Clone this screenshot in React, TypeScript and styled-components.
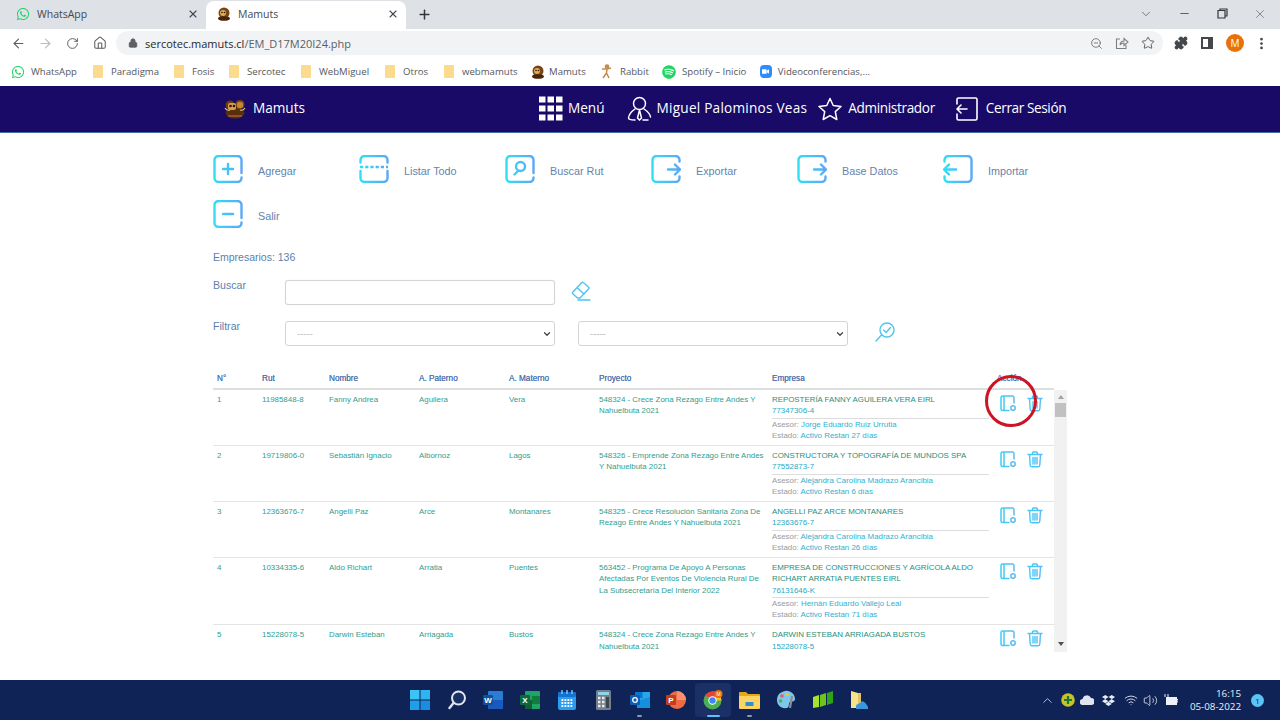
import React from 'react';
import styled, { createGlobalStyle } from 'styled-components';
import { ArrowLeft, ArrowRight, RotateCw, Home, Lock, ZoomOut, Star, X, Plus, ChevronDown, ChevronUp, Minus, Wifi, Volume2, Puzzle, EllipsisVertical } from 'lucide-react';
import { FaWhatsapp, FaSpotify, FaVideo, FaDropbox } from 'react-icons/fa';

const GlobalStyle = createGlobalStyle`
  html, body { margin: 0; padding: 0; background: #fff; }
  * { box-sizing: border-box; }
`;

const Screen = styled.div`
  width: 1280px;
  height: 720px;
  overflow: hidden;
  display: flex;
  flex-direction: column;
  font-family: "Liberation Sans", Arial, sans-serif;
  background: #fff;
`;

/* browser chrome */
const TabStrip = styled.div`
  height: 29px;
  flex: none;
  background: #dee1e6;
  display: flex;
  align-items: flex-end;
  font-family: "Open Sans", "Noto Sans", sans-serif;
  font-size: 10.5px;
  color: #45484d;
`;
const Tab = styled.div<{ $active?: boolean; $w: number }>`
  width: ${p => p.$w}px;
  height: 28px;
  padding: 0 7px 2px ${p => (p.$active ? 11 : 16)}px;
  display: flex;
  align-items: center;
  gap: 7px;
  background: ${p => (p.$active ? '#fff' : 'transparent')};
  border-radius: 8px 8px 0 0;
`;
const TabTitle = styled.span`
  flex: 1;
`;
const NewTab = styled.div`
  width: 36px;
  height: 28px;
  padding-bottom: 2px;
  display: flex;
  align-items: center;
  justify-content: center;
  color: #33363a;
`;
const WindowButtons = styled.div`
  margin-left: auto;
  height: 28px;
  padding: 0 1px 3px 0;
  display: flex;
  align-items: center;
  color: #4a4d52;
`;
const WindowButton = styled.div`
  width: 38px;
  display: flex;
  justify-content: center;
`;
const AddressRow = styled.div`
  height: 28px;
  flex: none;
  background: #fff;
  display: flex;
  align-items: center;
  padding-left: 5px;
  color: #5f6368;
`;
const NavButton = styled.div<{ $dim?: boolean }>`
  width: 27px;
  display: flex;
  justify-content: center;
  color: ${p => (p.$dim ? '#b9bcc1' : '#5a5e63')};
`;
const Omnibox = styled.div`
  width: 1047px;
  height: 24px;
  margin-left: 3px;
  background: #f1f3f4;
  border-radius: 12px;
  display: flex;
  align-items: center;
  padding: 0 8px 0 12px;
  font-family: "Open Sans", "Noto Sans", sans-serif;
  font-size: 11px;
  color: #5c5f64;
`;
const Url = styled.span`
  margin-left: 7px;
  flex: 1;
`;
const Host = styled.span`
  color: #26282c;
`;
const OmniIcons = styled.div`
  display: flex;
  align-items: center;
  gap: 12px;
`;
const ProfileArea = styled.div`
  display: flex;
  align-items: center;
  gap: 13px;
  margin-left: 11px;
`;
const Avatar = styled.div`
  width: 18px;
  height: 18px;
  border-radius: 50%;
  background: #e8710a;
  color: #fff;
  font-family: "Open Sans", sans-serif;
  font-size: 10px;
  display: flex;
  align-items: center;
  justify-content: center;
`;
const SidePanelIcon = styled.div`
  width: 12px;
  height: 12px;
  border: 2px solid #44474b;
  border-right-width: 5px;
`;
const Kebab = styled(EllipsisVertical)`
  margin-left: -3px;
`;
const BookmarkBar = styled.div`
  height: 29px;
  flex: none;
  background: #fff;
  display: flex;
  align-items: center;
  padding-left: 11px;
  font-family: "Open Sans", "Noto Sans", sans-serif;
  font-size: 9.6px;
  color: #55585d;
`;
const Bookmark = styled.div<{ $w: number; $gap?: number }>`
  width: ${p => p.$w}px;
  flex: none;
  display: flex;
  align-items: center;
  gap: ${p => p.$gap ?? 8}px;
  white-space: nowrap;
`;
const Folder = styled.div`
  width: 10px;
  height: 13px;
  background: #fcdc8c;
  border-radius: 1px;
  flex: none;
`;
const ZoomBadge = styled.div`
  width: 13px;
  height: 13px;
  border-radius: 4px;
  background: #2d8cff;
  color: #fff;
  display: flex;
  align-items: center;
  justify-content: center;
`;

/* site header */
const SiteBar = styled.header`
  height: 47px;
  flex: none;
  background: #190a68;
  border-bottom: 1px solid #4a6aa8;
  padding: 0 0 1px 224px;
  display: flex;
  align-items: center;
  color: #fff;
  font-family: "Open Sans", "Noto Sans", sans-serif;
  font-size: 13.6px;
`;
const Brand = styled.div`
  width: 314px;
  display: flex;
  align-items: center;
  gap: 7px;
`;
const SiteLink = styled.div<{ $gap: number; $mr: number }>`
  display: flex;
  align-items: center;
  gap: ${p => p.$gap}px;
  margin-right: ${p => p.$mr}px;
  white-space: nowrap;
`;
const SiteText = styled.span<{ $ls?: number }>`
  margin-bottom: 3px;
  letter-spacing: ${p => p.$ls ?? 0}px;
`;

/* page body */
const Content = styled.main`
  flex: 1;
  padding: 22px 0 0 213px;
  color: #5b7fae;
`;
const ActionGrid = styled.div`
  display: grid;
  grid-template-columns: repeat(6, 146px);
  grid-auto-rows: 45px;
  font-size: 10.8px;
  color: #6583ac;
`;
const Action = styled.div`
  display: flex;
  align-items: flex-start;
  gap: 15px;
  line-height: 33px;
`;
const BoxSvg = styled.svg`
  flex: none;
`;
const Counter = styled.div`
  margin-top: 6px;
  font-size: 10.5px;
  line-height: 12px;
`;
const FilterRow = styled.div<{ $mt: number }>`
  display: flex;
  align-items: flex-start;
  margin-top: ${p => p.$mt}px;
`;
const FilterLabel = styled.label`
  width: 72px;
  font-size: 10.6px;
  line-height: 11px;
`;
const TextBox = styled.input`
  width: 270px;
  height: 25px;
  border: 1px solid #d4d4d4;
  border-radius: 3px;
  background: #fff;
  box-shadow: 0 0 1px #ddd;
`;
const SelectBox = styled.div`
  position: relative;
  width: 270px;
  height: 25px;
  margin-right: 23px;
`;
const Select = styled.select`
  appearance: none;
  width: 100%;
  height: 100%;
  border: 1px solid #d4d4d4;
  border-radius: 3px;
  background: #fff;
  padding-left: 11px;
  font-family: "Liberation Sans", sans-serif;
  font-size: 9.5px;
  color: #b5b5b5;
`;
const SelectChevron = styled(ChevronDown)`
  position: absolute;
  right: 3px;
  top: 8px;
  pointer-events: none;
  color: #444;
`;
const Eraser = styled.svg`
  margin: 1px 0 0 16px;
`;
const CheckSearch = styled.svg`
  margin: 1px 0 0 4px;
`;

const TableWrap = styled.section`
  position: relative;
  width: 854px;
  margin-top: 26px;
`;
const columns = '45px 67px 90px 90px 90px 173px 225px 1fr';
const HeadRow = styled.div`
  width: 841px;
  height: 18px;
  border-bottom: 2px solid #dedede;
  display: grid;
  grid-template-columns: ${columns};
  font-size: 8.2px;
  line-height: 13px;
  color: #4f75b0;
`;
const HeadCell = styled.div`
  padding-left: 4px;
  text-shadow: 0 0 0.4px #4f75b0;
  white-space: nowrap;
`;
const TableBody = styled.div`
  display: flex;
  height: 262px;
  overflow: hidden;
`;
const Rows = styled.div`
  width: 841px;
  overflow: hidden;
`;
const Row = styled.div`
  display: grid;
  grid-template-columns: ${columns};
  border-bottom: 1px solid #e4e4e4;
  padding: 4px 0 3.8px;
  font-size: 7.9px;
  line-height: 11.3px;
  color: #2f9e8f;
`;
const Cell = styled.div`
  padding: 0 4px;
`;
const CompanyName = styled.div`
  color: #1f8f7c;
`;
const CompanyRut = styled.div`
  color: #27a9c0;
`;
const Rule = styled.div`
  width: 217px;
  height: 1px;
  margin: 1px 0 0;
  background: #dcdcdc;
`;
const Meta = styled.div`
  color: #9a9a9a;
`;
const MetaValue = styled.span`
  color: #2eb1cf;
`;
const RowTools = styled.div`
  padding-left: 7px;
  display: flex;
  align-items: flex-start;
  gap: 10px;
`;
const ToolSvg = styled.svg`
  flex: none;
`;
const Scrollbar = styled.div`
  width: 13px;
  height: 262px;
  background: #f1f1f1;
  display: flex;
  flex-direction: column;
  align-items: center;
  padding-top: 5px;
`;
const ArrowUp = styled.div`
  width: 0;
  height: 0;
  border-left: 3.5px solid transparent;
  border-right: 3.5px solid transparent;
  border-bottom: 4px solid #a3a3a3;
`;
const Thumb = styled.div`
  width: 11px;
  height: 14px;
  margin-top: 4px;
  background: #c1c1c1;
`;
const ArrowDown = styled.div`
  margin-top: auto;
  margin-bottom: 6px;
  width: 0;
  height: 0;
  border-left: 3.5px solid transparent;
  border-right: 3.5px solid transparent;
  border-top: 4px solid #505050;
`;
const RedCircle = styled.div`
  position: absolute;
  left: 772px;
  top: 3px;
  width: 52px;
  height: 52px;
  border: 3.6px solid #cc1424;
  border-radius: 50%;
  pointer-events: none;
`;

/* windows taskbar */
const Taskbar = styled.footer`
  height: 40px;
  flex: none;
  background: #0f2357;
  display: flex;
  align-items: center;
  color: #fff;
  padding-left: 402px;
`;
const TaskIcons = styled.div`
  display: flex;
  align-items: center;
`;
const TaskSlot = styled.div<{ $active?: boolean }>`
  position: relative;
  width: 36.6px;
  height: 34px;
  display: flex;
  align-items: center;
  justify-content: center;
  background: ${p => (p.$active ? '#1b3067' : 'transparent')};
  border-radius: 4px;
`;
const RunDot = styled.div<{ $active?: boolean }>`
  position: absolute;
  bottom: 0;
  left: 50%;
  width: ${p => (p.$active ? 13 : 5)}px;
  height: 2.5px;
  margin-left: ${p => (p.$active ? -6.5 : -2.5)}px;
  border-radius: 2px;
  background: ${p => (p.$active ? '#5cc3f5' : '#8e97ad')};
`;
const Tray = styled.div`
  margin-left: auto;
  display: flex;
  align-items: center;
  height: 40px;
  padding-right: 16px;
  gap: 7px;
`;
const TrayIcon = styled.div<{ $w: number }>`
  width: ${p => p.$w}px;
  display: flex;
  justify-content: center;
  color: #e8ecf5;
  svg {
    flex: none;
  }
`;
const Clock = styled.div`
  width: 53px;
  text-align: right;
  margin-left: 1px;
  font-family: "Open Sans", "Noto Sans", sans-serif;
  font-size: 9.8px;
  line-height: 13px;
  color: #eef1f7;
`;
const Notify = styled.div`
  width: 13px;
  height: 13px;
  margin-left: 3px;
  border-radius: 50%;
  background: #5cc3f5;
  color: #0f2357;
  font-family: "Open Sans", sans-serif;
  font-size: 8px;
  display: flex;
  align-items: center;
  justify-content: center;
`;
const HiddenDefs = styled.svg`
  position: absolute;
`;

const Gradients = () => (
  <HiddenDefs width="0" height="0">
    <defs>
      <linearGradient id="cy30" gradientUnits="userSpaceOnUse" x1="0" y1="0" x2="30" y2="0">
        <stop offset="0" stopColor="#2fe0f7" />
        <stop offset="1" stopColor="#5ca6f6" />
      </linearGradient>
      <linearGradient id="cy20" gradientUnits="userSpaceOnUse" x1="0" y1="0" x2="18" y2="0">
        <stop offset="0" stopColor="#38d0f5" />
        <stop offset="1" stopColor="#64b4f5" />
      </linearGradient>
    </defs>
  </HiddenDefs>
);

const Logo = () => (
  <svg width="22" height="20" viewBox="0 0 22 20">
    <ellipse cx="11" cy="14" rx="9.5" ry="5.5" fill="#5a2d0c" />
    <circle cx="6" cy="6" r="4.5" fill="#6d3a10" />
    <circle cx="16" cy="5.5" r="4.5" fill="#7c4514" />
    <rect x="4" y="4" width="8" height="7" rx="2" fill="#d2a24a" />
    <rect x="13" y="3" width="6" height="6" rx="2" fill="#c08a35" />
    <circle cx="6.5" cy="7" r="1.3" fill="#2c1405" />
    <circle cx="10" cy="7" r="1.3" fill="#2c1405" />
    <path d="M1 9 Q3 12 6 11 M21 9 Q19 12 16 11" stroke="#e6c67a" strokeWidth="1.2" fill="none" />
    <path d="M4 17 h14" stroke="#8d5519" strokeWidth="2" />
  </svg>
);

const TabLogo = () => (
  <svg width="14" height="14" viewBox="0 0 14 14">
    <circle cx="7" cy="6" r="5.5" fill="#7a4514" />
    <circle cx="6" cy="6" r="3" fill="#dcae55" />
    <circle cx="5" cy="5.5" r="0.8" fill="#2c1405" />
    <circle cx="7.5" cy="5.5" r="0.8" fill="#2c1405" />
    <ellipse cx="7" cy="11.5" rx="6" ry="2.3" fill="#4a250a" />
  </svg>
);

const Rabbit = () => (
  <svg width="11" height="15" viewBox="0 0 11 15" fill="none" stroke="#c58a4e" strokeWidth="1.5">
    <circle cx="6" cy="2.5" r="1.6" fill="#c58a4e" />
    <path d="M1 5 L6 5 L10 4 M6 5 L5.5 9 L2 14 M5.5 9 L8 14" />
  </svg>
);

type BoxKind = 'plus' | 'list' | 'search' | 'out' | 'in' | 'minus';

const BoxIcon = ({ kind }: { kind: BoxKind }) => {
  const frame = 'M28.5 18 V5 a4 4 0 0 0-4-4 H5.5 a4 4 0 0 0-4 4 V23 a4 4 0 0 0 4 4 H24.5 a4 4 0 0 0 4-4 V22.5';
  const body: Record<BoxKind, React.ReactNode> = {
    plus: <path d={`${frame} M15 9 V19 M10 14 H20`} />,
    minus: <path d={`${frame} M10 14 H20`} />,
    list: (
      <>
        <path d="M1.5 7.5 V5 a4 4 0 0 1 4-4 H24.5 a4 4 0 0 1 4 4 V7.5 M1.5 16 V23 a4 4 0 0 0 4 4 H24.5 a4 4 0 0 0 4-4 V16" />
        <path d="M1 12 H29" strokeLinecap="butt" strokeDasharray="3.2 2" />
      </>
    ),
    search: <path d={`${frame} M9.5 19.5 L13 16 M20 11.5 a4.5 4.5 0 1 1-9 0 a4.5 4.5 0 1 1 9 0`} />,
    out: <path d="M28.5 6.5 V5 a4 4 0 0 0-4-4 H5.5 a4 4 0 0 0-4 4 V23 a4 4 0 0 0 4 4 H24.5 a4 4 0 0 0 4-4 V21.5 M17 14.5 H28.5 M24 9.5 L29 14.5 L24 19.5" />,
    in: <path d="M1.5 6.5 V5 a4 4 0 0 1 4-4 H24.5 a4 4 0 0 1 4 4 V23 a4 4 0 0 1-4 4 H5.5 a4 4 0 0 1-4-4 V21.5 M13 14.5 H1.5 M6 9.5 L1 14.5 L6 19.5" />,
  };
  return (
    <BoxSvg width="30" height="28" viewBox="0 0 30 28" fill="none" stroke="url(#cy30)" strokeWidth="2.4" strokeLinecap="round" strokeLinejoin="round">
      {body[kind]}
    </BoxSvg>
  );
};

const DocSearch = () => (
  <ToolSvg width="17" height="18" viewBox="0 0 17 18" fill="none" stroke="url(#cy20)" strokeWidth="1.5" strokeLinecap="round">
    <path d="M14 9 V3.5 a1.5 1.5 0 0 0-1.5-1.5 H2.5 a1.5 1.5 0 0 0-1.5 1.5 V15 a1.5 1.5 0 0 0 1.5 1.5 H9 M4 2 V16.5" />
    <circle cx="13" cy="14" r="2.2" />
  </ToolSvg>
);

const Trash = () => (
  <ToolSvg width="16" height="18" viewBox="0 0 16 18" fill="none" stroke="url(#cy20)" strokeWidth="1.4" strokeLinecap="round">
    <path d="M1 4.5 H15 M5.5 4.5 V3 a1 1 0 0 1 1-1 H9.5 a1 1 0 0 1 1 1 V4.5 M2.5 4.5 L3.2 15 a1.7 1.7 0 0 0 1.7 1.7 H11.1 a1.7 1.7 0 0 0 1.7-1.7 L13.5 4.5 M6 7.5 V14 M8 7.5 V14 M10 7.5 V14" />
  </ToolSvg>
);

const ShareIcon = () => (
  <svg width="14" height="14" viewBox="0 0 14 14" fill="none" stroke="#7c8085" strokeWidth="1.1">
    <path d="M5 3 H1.5 V12.5 H11 V9 M5 9 Q5.5 5 9 5 V2.5 L13 6 L9 9.5 V7 Q6.5 7 5 9" />
  </svg>
);

const TaskIcon = ({ name }: { name: string }) => {
  switch (name) {
    case 'win':
      return (
        <svg width="20" height="20" viewBox="0 0 20 20">
          <rect x="0" y="0" width="9.5" height="9.5" fill="#3cc4f4" />
          <rect x="10.5" y="0" width="9.5" height="9.5" fill="#2fb4f0" />
          <rect x="0" y="10.5" width="9.5" height="9.5" fill="#1f9fe6" />
          <rect x="10.5" y="10.5" width="9.5" height="9.5" fill="#1a8ede" />
        </svg>
      );
    case 'search':
      return (
        <svg width="18" height="20" viewBox="0 0 18 20" fill="none">
          <circle cx="10.5" cy="8" r="6.5" stroke="#dfe6f2" strokeWidth="2" fill="#1c2f63" />
          <path d="M5.5 13 L1.5 18" stroke="#dfe6f2" strokeWidth="2.4" strokeLinecap="round" />
        </svg>
      );
    case 'word':
      return (
        <svg width="20" height="18" viewBox="0 0 20 18">
          <rect x="5" y="0" width="15" height="18" rx="1" fill="#2b7cd3" />
          <rect x="5" y="9" width="15" height="9" fill="#185abd" />
          <rect x="0" y="4" width="10" height="10" rx="1" fill="#124e9e" />
          <text x="5" y="12" textAnchor="middle" fontFamily="Liberation Sans" fontSize="8" fontWeight="700" fill="#fff">W</text>
        </svg>
      );
    case 'excel':
      return (
        <svg width="20" height="18" viewBox="0 0 20 18">
          <rect x="5" y="0" width="15" height="18" rx="1" fill="#21a366" />
          <rect x="12" y="5" width="8" height="8" fill="#107c41" />
          <rect x="5" y="9" width="7" height="9" fill="#185c37" />
          <rect x="0" y="4" width="10" height="10" rx="1" fill="#0d6a36" />
          <text x="5" y="12" textAnchor="middle" fontFamily="Liberation Sans" fontSize="8" fontWeight="700" fill="#fff">X</text>
        </svg>
      );
    case 'calendar':
      return (
        <svg width="18" height="20" viewBox="0 0 18 20">
          <rect x="0" y="2" width="18" height="18" rx="2" fill="#2a9df0" />
          <rect x="0" y="2" width="18" height="5" rx="1.5" fill="#1473d0" />
          <path d="M4 0 V4 M9 0 V4 M14 0 V4" stroke="#7fcbf7" strokeWidth="1.4" />
          <path d="M3.5 10 H14.5 M3.5 13 H14.5 M3.5 16 H14.5" stroke="#fff" strokeWidth="1.8" strokeDasharray="1.8 1.2" />
        </svg>
      );
    case 'calc':
      return (
        <svg width="15" height="20" viewBox="0 0 15 20">
          <rect x="0" y="0" width="15" height="20" rx="1.5" fill="#75808c" />
          <rect x="2" y="2" width="11" height="3" fill="#8fd3e8" />
          <path d="M2 8 h2.5 M6 8 h2.5 M2 12 h2.5 M6 12 h2.5 M2 16 h2.5 M6 16 h2.5" stroke="#e8eaed" strokeWidth="2.4" />
          <rect x="10" y="7" width="3" height="11" fill="#3a4752" />
        </svg>
      );
    case 'outlook':
      return (
        <svg width="20" height="18" viewBox="0 0 20 18">
          <rect x="5" y="1" width="15" height="12" fill="#28a8ea" />
          <rect x="5" y="1" width="7.5" height="6" fill="#0078d4" />
          <path d="M7 10 L20 6 V17 H7 Z" fill="#1490df" />
          <rect x="0" y="4" width="10" height="10" rx="1" fill="#0f5fb0" />
          <circle cx="5" cy="9" r="2.3" fill="none" stroke="#fff" strokeWidth="1.3" />
        </svg>
      );
    case 'ppt':
      return (
        <svg width="20" height="18" viewBox="0 0 20 18">
          <circle cx="11" cy="9" r="9" fill="#ed6c47" />
          <path d="M11 0 A9 9 0 0 1 20 9 H11 Z" fill="#ff8f6b" />
          <rect x="0" y="4" width="10" height="10" rx="1" fill="#c43e1c" />
          <text x="5" y="12" textAnchor="middle" fontFamily="Liberation Sans" fontSize="8" fontWeight="700" fill="#fff">P</text>
        </svg>
      );
    case 'chrome':
      return (
        <svg width="20" height="20" viewBox="0 0 20 20">
          <circle cx="9.5" cy="10.5" r="9" fill="#4caf50" />
          <path d="M9.5 1.5 A9 9 0 0 1 18.5 10.5 H9.5 Z" fill="#fbc02d" />
          <path d="M1.7 6 A9 9 0 0 1 9.5 1.5 H16 L12 7 H6 Z" fill="#ea4335" />
          <circle cx="9.5" cy="10.5" r="4.2" fill="#fff" />
          <circle cx="9.5" cy="10.5" r="3.2" fill="#4285f4" />
          <circle cx="15.5" cy="4" r="4" fill="#e8710a" />
          <text x="15.5" y="6" textAnchor="middle" fontFamily="Liberation Sans" fontSize="5" fill="#fff">M</text>
        </svg>
      );
    case 'files':
      return (
        <svg width="21" height="18" viewBox="0 0 21 18">
          <path d="M0 2 a1 1 0 0 1 1-1 H7 L9 3 H20 a1 1 0 0 1 1 1 V6 H0 Z" fill="#e6a817" />
          <rect x="0" y="5" width="21" height="13" rx="1" fill="#fcd462" />
          <rect x="6.5" y="11" width="8" height="4" fill="#2b8fd8" />
        </svg>
      );
    case 'paint':
      return (
        <svg width="20" height="20" viewBox="0 0 20 20">
          <path d="M9 1 C14 0 19 4 19 9 C19 12 16 11 14 12 C12 13 14 17 11 18 C5 19 1 15 1 10 C1 5 4 2 9 1 Z" fill="#7fc6ee" />
          <circle cx="6" cy="6" r="1.8" fill="#f05a5a" />
          <circle cx="11" cy="4.5" r="1.8" fill="#f2c230" />
          <circle cx="4.5" cy="11" r="1.8" fill="#4caf50" />
          <path d="M16 6 L14 18" stroke="#8d8d8d" strokeWidth="2.2" />
        </svg>
      );
    case 'bars':
      return (
        <svg width="20" height="18" viewBox="0 0 20 18">
          <path d="M0 6 L6 4 V16 L0 17 Z" fill="#a6e22e" />
          <path d="M7 4 L13 2 V14 L7 16 Z" fill="#6fc41c" />
          <path d="M14 2 L20 0 V12 L14 14 Z" fill="#2ea318" />
        </svg>
      );
    default:
      return (
        <svg width="18" height="20" viewBox="0 0 18 20">
          <path d="M1 1 L8 3 V18 H1 Z" fill="#f7e08e" />
          <path d="M8 3 H11 V14 H8 Z" fill="#e2c263" />
          <path d="M6 16 C7 13 10 14 11 12 C13 10 16 13 18 17 V19 H6 Z" fill="#3a96dd" />
        </svg>
      );
  }
};

type Person = {
  n: number; rut: string; nombre: string; pat: string; mat: string; proyecto: string;
  empresa: string; rutE: string; asesor?: string; estado?: string;
};

const people: Person[] = [
  { n: 1, rut: '11985848-8', nombre: 'Fanny Andrea', pat: 'Aguilera', mat: 'Vera', proyecto: '548324 - Crece Zona Rezago Entre Andes Y Nahuelbuta 2021', empresa: 'REPOSTERÍA FANNY AGUILERA VERA EIRL', rutE: '77347306-4', asesor: 'Jorge Eduardo Ruiz Urrutia', estado: 'Activo Restan 27 días' },
  { n: 2, rut: '19719806-0', nombre: 'Sebastián Ignacio', pat: 'Albornoz', mat: 'Lagos', proyecto: '548326 - Emprende Zona Rezago Entre Andes Y Nahuelbuta 2021', empresa: 'CONSTRUCTORA Y TOPOGRAFÍA DE MUNDOS SPA', rutE: '77552873-7', asesor: 'Alejandra Carolina Madrazo Arancibia', estado: 'Activo Restan 6 días' },
  { n: 3, rut: '12363676-7', nombre: 'Angelli Paz', pat: 'Arce', mat: 'Montanares', proyecto: '548325 - Crece Resolución Sanitaria Zona De Rezago Entre Andes Y Nahuelbuta 2021', empresa: 'ANGELLI PAZ ARCE MONTANARES', rutE: '12363676-7', asesor: 'Alejandra Carolina Madrazo Arancibia', estado: 'Activo Restan 26 días' },
  { n: 4, rut: '10334335-6', nombre: 'Aldo Richart', pat: 'Arratia', mat: 'Puentes', proyecto: '563452 - Programa De Apoyo A Personas Afectadas Por Eventos De Violencia Rural De La Subsecretaría Del Interior 2022', empresa: 'EMPRESA DE CONSTRUCCIONES Y AGRÍCOLA ALDO RICHART ARRATIA PUENTES EIRL', rutE: '76131646-K', asesor: 'Hernán Eduardo Vallejo Leal', estado: 'Activo Restan 71 días' },
  { n: 5, rut: '15228078-5', nombre: 'Darwin Esteban', pat: 'Arriagada', mat: 'Bustos', proyecto: '548324 - Crece Zona Rezago Entre Andes Y Nahuelbuta 2021', empresa: 'DARWIN ESTEBAN ARRIAGADA BUSTOS', rutE: '15228078-5' },
];

const actions: { kind: BoxKind; label: string }[] = [
  { kind: 'plus', label: 'Agregar' },
  { kind: 'list', label: 'Listar Todo' },
  { kind: 'search', label: 'Buscar Rut' },
  { kind: 'out', label: 'Exportar' },
  { kind: 'out', label: 'Base Datos' },
  { kind: 'in', label: 'Importar' },
  { kind: 'minus', label: 'Salir' },
];

const folders: [string, number][] = [['Paradigma', 81], ['Fosis', 55], ['Sercotec', 72], ['WebMiguel', 84], ['Otros', 59], ['webmamuts', 87]];
const taskApps = ['win', 'search', 'word', 'excel', 'calendar', 'calc', 'outlook', 'ppt', 'chrome', 'files', 'paint', 'bars', 'share'];

export default function App() {
  return (
    <Screen>
      <GlobalStyle />
      <Gradients />
      <TabStrip>
        <Tab $w={206}>
          <FaWhatsapp size={14} color="#25d366" />
          <TabTitle>WhatsApp</TabTitle>
          <X size={12} strokeWidth={2.2} />
        </Tab>
        <Tab $w={200} $active>
          <TabLogo />
          <TabTitle>Mamuts</TabTitle>
          <X size={12} strokeWidth={2.2} />
        </Tab>
        <NewTab><Plus size={15} strokeWidth={2.4} /></NewTab>
        <WindowButtons>
          <WindowButton><ChevronDown size={14} strokeWidth={1.2} /></WindowButton>
          <WindowButton><Minus size={13} strokeWidth={1.6} /></WindowButton>
          <WindowButton>
            <svg width="11" height="11" viewBox="0 0 11 11" fill="none" stroke="#33363a" strokeWidth="1.2"><path d="M3 2.5 V1 H10 V8 H8 M1 2.5 H8 V10 H1 Z" /></svg>
          </WindowButton>
          <WindowButton><X size={14} strokeWidth={1} /></WindowButton>
        </WindowButtons>
      </TabStrip>
      <AddressRow>
        <NavButton><ArrowLeft size={15} strokeWidth={1.8} /></NavButton>
        <NavButton $dim><ArrowRight size={15} strokeWidth={1.8} /></NavButton>
        <NavButton><RotateCw size={13} strokeWidth={1.8} /></NavButton>
        <NavButton><Home size={14} strokeWidth={1.8} /></NavButton>
        <Omnibox>
          <Lock size={10} fill="#5c5f64" strokeWidth={2} />
          <Url><Host>sercotec.mamuts.cl</Host>/EM_D17M20I24.php</Url>
          <OmniIcons>
            <ZoomOut size={13} color="#6a6e73" strokeWidth={1.6} />
            <ShareIcon />
            <Star size={14} color="#55585d" strokeWidth={1.6} />
          </OmniIcons>
        </Omnibox>
        <ProfileArea>
          <Puzzle size={14} fill="#44474b" color="#44474b" />
          <SidePanelIcon />
          <Avatar>M</Avatar>
          <Kebab size={15} color="#44474b" strokeWidth={2.4} />
        </ProfileArea>
      </AddressRow>
      <BookmarkBar>
        <Bookmark $w={82} $gap={6}><FaWhatsapp size={14} color="#25d366" />WhatsApp</Bookmark>
        {folders.map(([name, w]) => (
          <Bookmark key={name} $w={w}><Folder />{name}</Bookmark>
        ))}
        <Bookmark $w={70} $gap={4}><TabLogo />Mamuts</Bookmark>
        <Bookmark $w={61}><Rabbit />Rabbit</Bookmark>
        <Bookmark $w={98} $gap={6}><FaSpotify size={14} color="#1ed760" />Spotify – Inicio</Bookmark>
        <Bookmark $w={110} $gap={6}><ZoomBadge><FaVideo size={7} /></ZoomBadge>Videoconferencias,...</Bookmark>
      </BookmarkBar>
      <SiteBar>
        <Brand><Logo /><SiteText>Mamuts</SiteText></Brand>
        <SiteLink $gap={5} $mr={22}>
          <svg width="25" height="25" viewBox="0 0 25 25" fill="#fff">
            {[0, 9, 18].map(y => [1, 9.5, 18].map(x => <rect key={`${x}-${y}`} x={x} y={y + 0.5} width="6.5" height="6" />))}
          </svg>
          <SiteText>Menú</SiteText>
        </SiteLink>
        <SiteLink $gap={5} $mr={11}>
          <svg width="25" height="25" viewBox="0 0 25 25" fill="none" stroke="#fff" strokeWidth="1.5" strokeLinecap="round">
            <circle cx="12.5" cy="7.5" r="6" />
            <path d="M8 13 C5 15 2 18 1.5 22 C1.5 24 5 24 8 24 M17 13 C20 15 23 18 23.5 21 M16 24 H21 M12.5 14 L10.5 22 L12.5 24 L14.5 22 Z" />
          </svg>
          <SiteText $ls={0.24}>Miguel Palominos Veas</SiteText>
        </SiteLink>
        <SiteLink $gap={6} $mr={21}>
          <svg width="24" height="24" viewBox="0 0 24 24" fill="none" stroke="#fff" strokeWidth="1.5" strokeLinejoin="round">
            <path d="M12 1.5 L15.2 8.5 L23 9.5 L17.3 14.6 L18.8 22.5 L12 18.6 L5.2 22.5 L6.7 14.6 L1 9.5 L8.8 8.5 Z" />
          </svg>
          <SiteText $ls={-0.35}>Administrador</SiteText>
        </SiteLink>
        <SiteLink $gap={8} $mr={0}>
          <svg width="22" height="24" viewBox="0 0 22 24" fill="none" stroke="#fff" strokeWidth="1.6" strokeLinecap="round" strokeLinejoin="round">
            <path d="M1 7 V2.5 a1.5 1.5 0 0 1 1.5-1.5 H19.5 a1.5 1.5 0 0 1 1.5 1.5 V21.5 a1.5 1.5 0 0 1-1.5 1.5 H2.5 a1.5 1.5 0 0 1-1.5-1.5 V17 M11 12 H1.5 M5 8 L1 12 L5 16" />
          </svg>
          <SiteText $ls={-0.4}>Cerrar Sesión</SiteText>
        </SiteLink>
      </SiteBar>
      <Content>
        <ActionGrid>
          {actions.map(a => (
            <Action key={a.label}>
              <BoxIcon kind={a.kind} />
              {a.label}
            </Action>
          ))}
        </ActionGrid>
        <Counter>Empresarios: 136</Counter>
        <FilterRow $mt={17}>
          <FilterLabel>Buscar</FilterLabel>
          <TextBox />
          <Eraser width="20" height="20" viewBox="0 0 20 20" fill="none" stroke="#4fc4ee" strokeWidth="1.4" strokeLinejoin="round" strokeLinecap="round">
            <path d="M1.5 11.5 L10.5 1.8 a1.5 1.5 0 0 1 2 0 L17.5 6 a1.5 1.5 0 0 1 0 2 L9 17 H6.5 L1.5 12.5 Z M6 6.5 L13 13 M7 19 H19" />
          </Eraser>
        </FilterRow>
        <FilterRow $mt={16}>
          <FilterLabel>Filtrar</FilterLabel>
          <SelectBox>
            <Select defaultValue="-"><option value="-">-----</option></Select>
            <SelectChevron size={10} strokeWidth={3} />
          </SelectBox>
          <SelectBox>
            <Select defaultValue="-"><option value="-">-----</option></Select>
            <SelectChevron size={10} strokeWidth={3} />
          </SelectBox>
          <CheckSearch width="20" height="20" viewBox="0 0 20 20" fill="none" stroke="#4fc4ee" strokeWidth="1.4" strokeLinecap="round" strokeLinejoin="round">
            <circle cx="12" cy="8" r="7" />
            <path d="M8.5 8 L11 10.5 L15.5 5.5 M6.5 13 L1 19" />
          </CheckSearch>
        </FilterRow>
        <TableWrap>
          <HeadRow>
            {['N°', 'Rut', 'Nombre', 'A. Paterno', 'A. Materno', 'Proyecto', 'Empresa', 'Acción'].map(h => (
              <HeadCell key={h}>{h}</HeadCell>
            ))}
          </HeadRow>
          <TableBody>
            <Rows>
              {people.map(p => (
                <Row key={p.n}>
                  <Cell>{p.n}</Cell>
                  <Cell>{p.rut}</Cell>
                  <Cell>{p.nombre}</Cell>
                  <Cell>{p.pat}</Cell>
                  <Cell>{p.mat}</Cell>
                  <Cell>{p.proyecto}</Cell>
                  <Cell>
                    <CompanyName>{p.empresa}</CompanyName>
                    <CompanyRut>{p.rutE}</CompanyRut>
                    {p.asesor && (
                      <>
                        <Rule />
                        <Meta>Asesor: <MetaValue>{p.asesor}</MetaValue></Meta>
                        <Meta>Estado: <MetaValue>{p.estado}</MetaValue></Meta>
                      </>
                    )}
                  </Cell>
                  <RowTools><DocSearch /><Trash /></RowTools>
                </Row>
              ))}
            </Rows>
            <Scrollbar>
              <ArrowUp />
              <Thumb />
              <ArrowDown />
            </Scrollbar>
          </TableBody>
          <RedCircle />
        </TableWrap>
      </Content>
      <Taskbar>
        <TaskIcons>
          {taskApps.map(name => (
            <TaskSlot key={name} $active={name === 'chrome'}>
              <TaskIcon name={name} />
              {(name === 'outlook' || name === 'files') && <RunDot />}
              {name === 'chrome' && <RunDot $active />}
            </TaskSlot>
          ))}
        </TaskIcons>
        <Tray>
          <TrayIcon $w={14}><ChevronUp size={15} strokeWidth={1.2} /></TrayIcon>
          <TrayIcon $w={14}>
            <svg width="14" height="14" viewBox="0 0 14 14">
              <circle cx="7" cy="7" r="6.8" fill="#c8c22a" />
              <path d="M7 3 V11 M3 7 H11" stroke="#1c7a2e" strokeWidth="2.2" />
            </svg>
          </TrayIcon>
          <TrayIcon $w={10}>
            <svg width="14" height="10" viewBox="0 0 14 10" fill="#dfe4ee">
              <path d="M3 10 a3 3 0 0 1-.5-6 a4.5 4.5 0 0 1 8.5-1 a3.5 3.5 0 0 1 0 7 Z" />
            </svg>
          </TrayIcon>
          <TrayIcon $w={18}><FaDropbox size={13} /></TrayIcon>
          <TrayIcon $w={14}><Wifi size={14} strokeWidth={1.5} /></TrayIcon>
          <TrayIcon $w={10}><Volume2 size={15} strokeWidth={1.3} /></TrayIcon>
          <TrayIcon $w={18}>
            <svg width="14" height="12" viewBox="0 0 14 12" fill="none" stroke="#eef1f7" strokeWidth="1">
              <rect x="2.5" y="3.5" width="10" height="7" fill="#eef1f7" />
              <path d="M12.5 5.5 H14 V8 H12.5 M1 0 V3 M4 0 V3" />
            </svg>
          </TrayIcon>
          <Clock>16:15<br />05-08-2022</Clock>
          <Notify>1</Notify>
        </Tray>
      </Taskbar>
    </Screen>
  );
}
